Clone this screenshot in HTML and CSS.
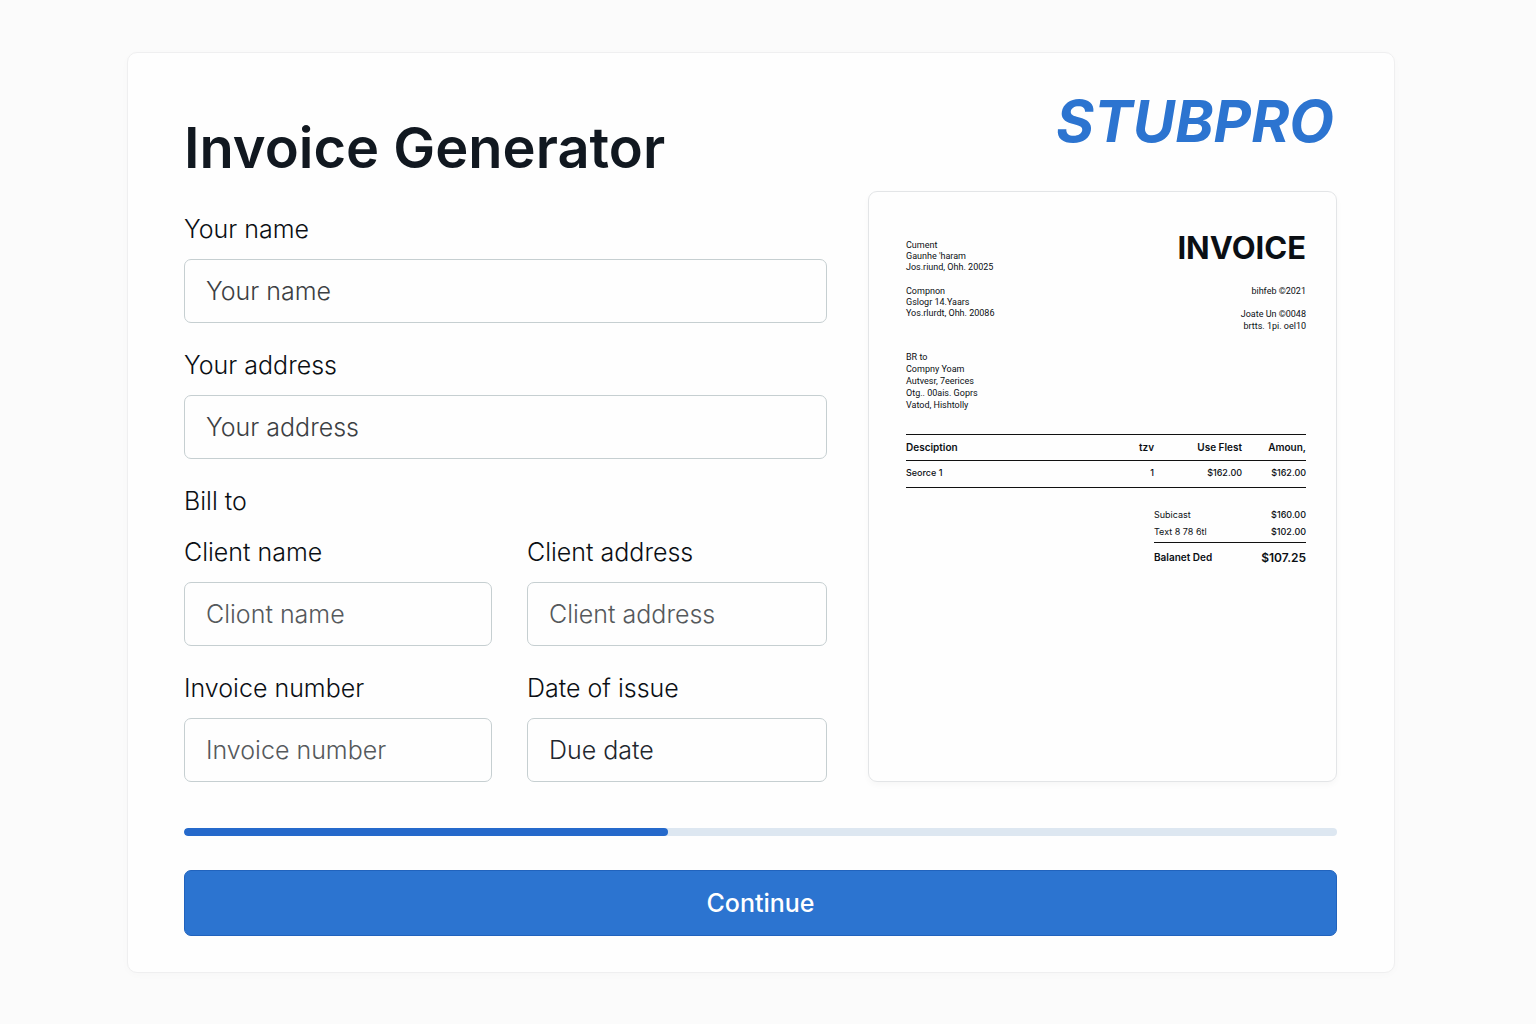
FILE: index.html
```
<!doctype html>
<html lang="en">
  <head>
    <meta charset="utf-8">
    <meta name="viewport" content="width=device-width, initial-scale=1">
    <title>Invoice Generator</title>
    <link rel="stylesheet" href="styles.css">
  </head>
  <body>
    <form class="card">
      <div class="columns">
        <div class="fields">
          <h1>Invoice Generator</h1>

          <div class="field">
            <label for="name">Your name</label>
            <input type="text" id="name" name="name" placeholder="Your name">
          </div>
          <div class="field">
            <label for="address">Your address</label>
            <input type="text" id="address" name="address" placeholder="Your address">
          </div>

          <h2>Bill to</h2>
          <div class="pairs">
            <div class="field">
              <label for="client-name">Client name</label>
              <input type="text" id="client-name" name="client-name" class="muted" placeholder="Cliont name">
            </div>
            <div class="field">
              <label for="client-address">Client address</label>
              <input type="text" id="client-address" name="client-address" class="muted" placeholder="Client address">
            </div>
            <div class="field">
              <label for="number">Invoice number</label>
              <input type="text" id="number" name="number" class="muted" placeholder="Invoice number">
            </div>
            <div class="field">
              <label for="issued">Date of issue</label>
              <input type="text" id="issued" name="issued" class="dark" placeholder="Due date">
            </div>
          </div>
        </div>

        <div class="side">
          <div class="logo">STUBPRO</div>

          <section class="preview">
            <div class="preview-head">
              <div class="addresses">
                <p>Cument<br>Gaunhe 'haram<br>Jos.riund, Ohh. 20025</p>
                <p>Compnon<br>Gslogr 14.Yaars<br>Yos.rlurdt, Ohh. 20086</p>
              </div>
              <div class="meta">
                <h2>INVOICE</h2>
                <p>bihfeb ©2021</p>
                <p class="loose">Joate Un ©0048<br>brtts. 1pi. oel10</p>
              </div>
            </div>

            <p class="bill-to loose">BR to<br>Compny Yoam<br>Autvesr, 7eerices<br>Otg.. 00ais. Goprs<br>Vatod, Hishtolly</p>

            <table class="items">
              <thead>
                <tr><th>Desciption</th><th>tzv</th><th>Use Flest</th><th>Amoun,</th></tr>
              </thead>
              <tbody>
                <tr><td>Seorce 1</td><td>1</td><td>$162.00</td><td>$162.00</td></tr>
              </tbody>
            </table>

            <table class="totals">
              <tbody>
                <tr><td>Subicast</td><td>$160.00</td></tr>
                <tr><td>Text 8 78 6tl</td><td>$102.00</td></tr>
              </tbody>
              <tfoot>
                <tr><th>Balanet Ded</th><td>$107.25</td></tr>
              </tfoot>
            </table>
          </section>
        </div>
      </div>

      <progress value="42" max="100" aria-label="Progress"></progress>
      <button type="submit">Continue</button>
    </form>
  </body>
</html>
```
FILE: styles.css
```
* {
  box-sizing: border-box;
}

body {
  margin: 0;
  padding: 52px 141px 51px 127px;
  background: #fbfbfb;
  color: #0b0f14;
  font-family: Inter, "Liberation Sans", sans-serif;
}

h1, h2, p {
  margin: 0;
}

.card {
  padding: 38px 57px 36px 56px;
  background: #fefefe;
  border: 1px solid #efeff0;
  border-radius: 10px;
  box-shadow: 0 2px 8px rgba(0, 0, 0, .02);
}

.columns {
  display: grid;
  grid-template-columns: 643fr 469fr;
  gap: 41px;
}

/* form side */

.fields {
  padding-top: 21px;
  min-width: 0;
}

h1 {
  margin-bottom: 29px;
  font-size: 56px;
  line-height: 72px;
  font-weight: 600;
  color: #111820;
}

.field {
  display: flex;
  flex-direction: column;
  gap: 14px;
  margin-bottom: 26px;
}

label, .fields h2 {
  font-size: 25px;
  line-height: 32px;
  font-weight: 300;
}

.fields h2 {
  margin-bottom: 19px;
}

input {
  width: 100%;
  height: 64px;
  padding: 0 21px;
  border: 1px solid #c6cfd1;
  border-radius: 7px;
  background: #fefefe;
  color: #111820;
  font: 300 25px Inter, "Liberation Sans", sans-serif;
}

input::placeholder {
  color: #3c4043;
  opacity: 1;
}

input.muted::placeholder {
  color: #55595c;
}

input.dark::placeholder {
  color: #22272e;
}

.pairs {
  display: grid;
  grid-template-columns: 308fr 300fr;
  gap: 26px 35px;
}

.pairs .field {
  margin-bottom: 0;
}

/* preview side */

.side {
  display: flex;
  flex-direction: column;
  gap: 40px;
  min-width: 0;
}

.logo {
  padding-right: 3px;
  text-align: right;
  font: italic 700 58px/60px Inter, sans-serif;
  color: #2c74d0;
}

.preview {
  flex: 1;
  padding: 38px 30px 38px 37px;
  border: 1px solid #e3e5e7;
  border-radius: 9px;
  box-shadow: 0 3px 6px rgba(0, 0, 0, .03);
  font-size: 9px;
  line-height: 11px;
}

.preview p {
  font-family: Roboto, sans-serif;
}

.preview-head {
  display: flex;
  justify-content: space-between;
}

.addresses {
  display: flex;
  flex-direction: column;
  gap: 13px;
  padding-top: 10px;
}

.meta {
  text-align: right;
}

.meta h2 {
  margin-bottom: 20px;
  font-size: 31px;
  line-height: 36px;
  font-weight: 700;
}

.meta p {
  margin-bottom: 11px;
}

.preview .loose {
  line-height: 12px;
}

.bill-to {
  margin: 8px 0 23px;
}

table {
  border-collapse: collapse;
}

th, td {
  padding: 0;
  text-align: right;
  font-weight: 500;
}

th {
  font-size: 10px;
  font-weight: 600;
}

th:first-child, td:first-child {
  text-align: left;
}

.items {
  width: 100%;
  border-top: 1px solid #111;
}

.items tr {
  height: 26px;
  border-bottom: 1px solid #111;
}

.items td {
  padding: 6px 0 9px;
}

.items th:nth-child(3) {
  width: 22%;
}

.items th:nth-child(4) {
  width: 16%;
}

.totals {
  width: 38%;
  margin: 18px 0 0 auto;
}

.totals tr {
  height: 17px;
}

.totals td:first-child {
  font-weight: 400;
}

.totals tbody tr:last-child td {
  padding: 3px 0 5px;
}

.totals tfoot tr {
  height: 30px;
  border-top: 1px solid #111;
}

.totals tfoot td {
  font-size: 12px;
  font-weight: 600;
}

/* footer */

progress {
  display: block;
  width: 100%;
  height: 8px;
  margin: 46px 0 34px;
  border: 0;
  border-radius: 4px;
  overflow: hidden;
  background: #dde7f1;
  -webkit-appearance: none;
  appearance: none;
}

progress::-webkit-progress-bar {
  background: #dde7f1;
}

progress::-webkit-progress-value {
  border-radius: 4px;
  background: #2569cb;
}

button {
  width: 100%;
  height: 66px;
  border: 1px solid #2163bd;
  border-radius: 7px;
  background: #2c74d0;
  color: #fff;
  font: 500 25px Inter, "Liberation Sans", sans-serif;
}
```
